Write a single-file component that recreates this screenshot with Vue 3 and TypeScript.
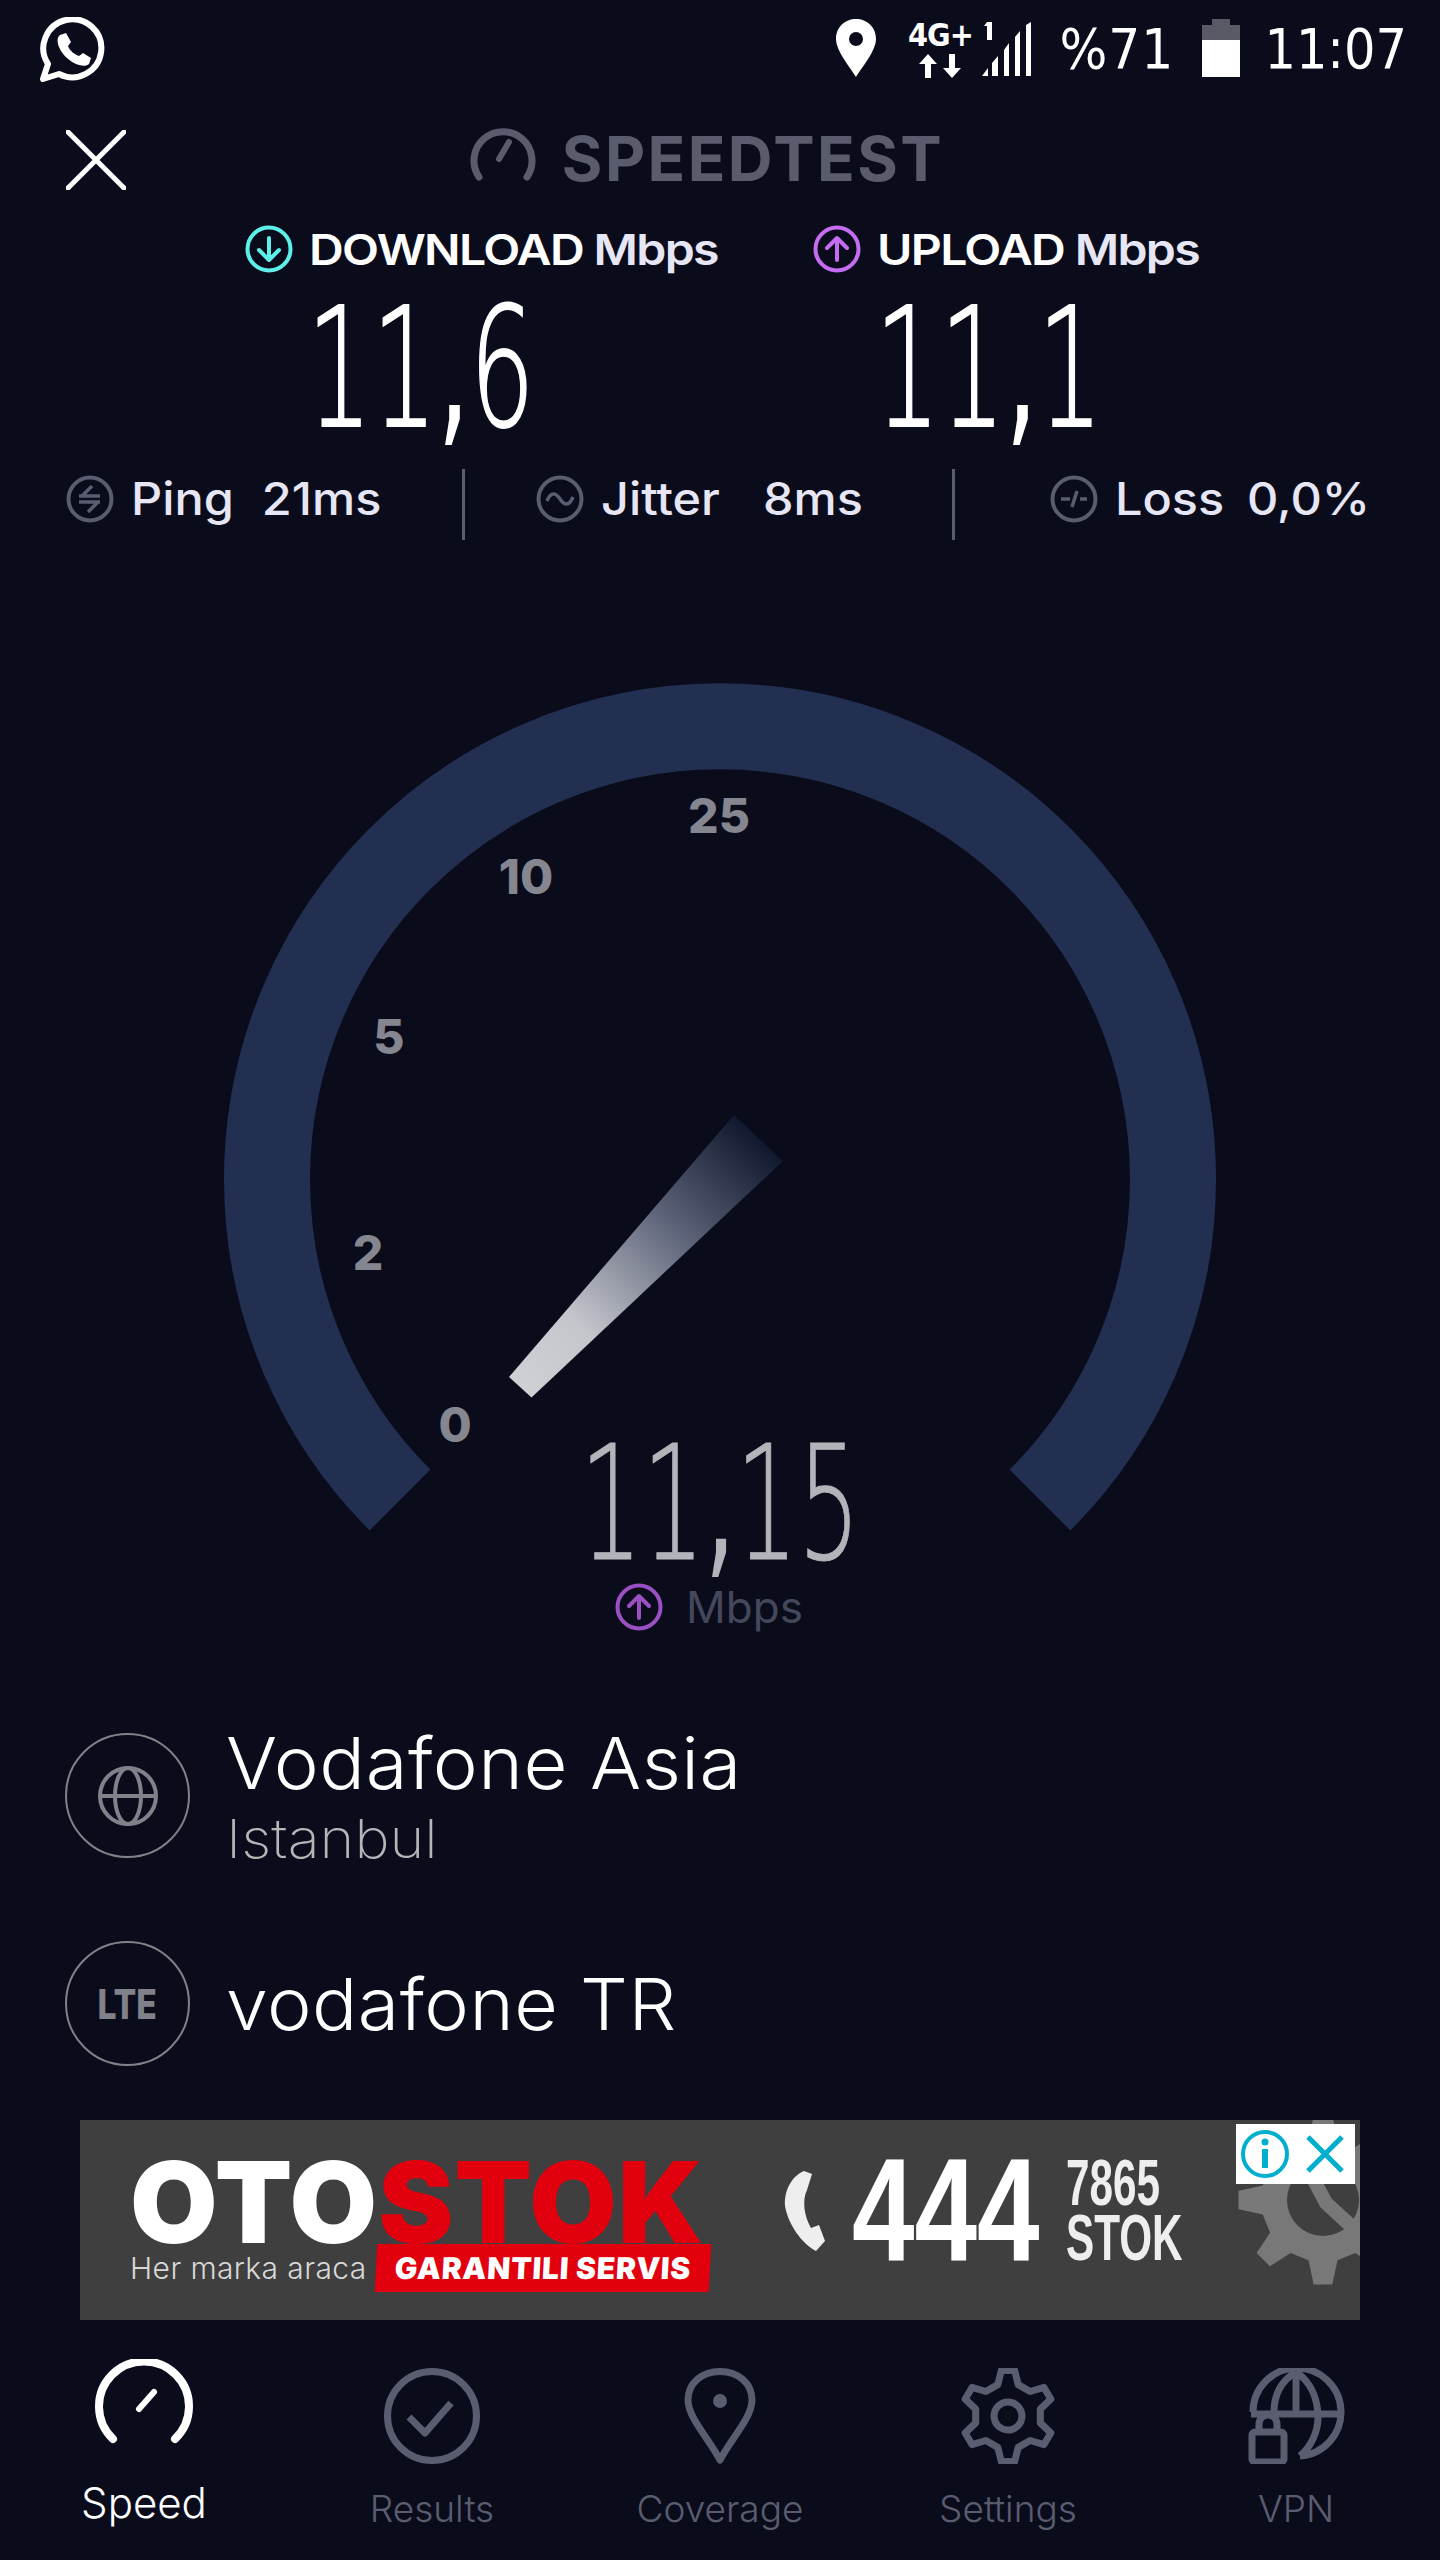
<template>
  <div class="screen">
    <!-- status bar -->
    <div class="status">
      <svg class="whatsapp" width="68" height="66" viewBox="0 0 68 66">
        <path d="M5 62 L10 47 A29 29 0 1 1 21 57 Z" fill="none" stroke="#fff" stroke-width="6" stroke-linejoin="round" />
        <path d="M22 18 l6 -2 5 9 -3 4 c2 5 6 8 11 10 l4 -3 8 5 -2 6 c-3 3 -9 2 -15 -1 c-7 -4 -12 -9 -15 -16 c-2 -5 -2 -10 1 -12 Z" fill="#fff" />
      </svg>
      <div class="status-right">
        <svg width="40" height="58" viewBox="0 0 40 58">
          <path fill-rule="evenodd" d="M20 0 C9 0 0 8 0 20 C0 32 14 48 20 58 C26 48 40 32 40 20 C40 8 31 0 20 0 Z M20 13 a7 7 0 1 1 0 14 a7 7 0 0 1 0 -14 Z" fill="#fff" />
        </svg>
        <div class="net">
          <span class="net-label">4G+</span>
          <svg width="42" height="24" viewBox="0 0 42 24">
            <path d="M9 0 L18 10 H12 V24 H6 V10 H0 Z M33 24 L42 14 H36 V0 H30 V14 H24 Z" fill="#fff" />
          </svg>
        </div>
        <svg class="signal" width="50" height="56" viewBox="0 0 50 56">
          <path d="M5 0 H10 V18 H5 V4 H2 Z" fill="#fff" />
          <path d="M0 54 L6 46 V54 Z M10 41 L16 34 V54 H10 Z M22 28 L27 21 V54 H22 Z M33 15 L38 9 V54 H33 Z M44 3 L49 0 V54 H44 Z" fill="#fff" />
        </svg>
        <span class="status-text pct">%71</span>
        <svg width="38" height="58" viewBox="0 0 38 58">
          <path d="M10 0 H28 V6 H38 V21 H0 V6 H10 Z" fill="#5a5a66" />
          <rect y="21" width="38" height="37" fill="#fff" />
        </svg>
        <span class="status-text time">11:07</span>
      </div>
    </div>

    <!-- title row -->
    <div class="header">
      <svg class="close" width="60" height="60" viewBox="0 0 60 60">
        <path d="M2 2 L58 58 M58 2 L2 58" stroke="#fff" stroke-width="5" stroke-linecap="round" />
      </svg>
      <div class="brand">
        <svg class="brand-mark" width="66" height="58" viewBox="0 0 66 58">
          <path d="M9 53 A29 29 0 1 1 57 53" fill="none" stroke="#5a5c6e" stroke-width="7" stroke-linecap="round" />
          <path d="M29 35 L39 18" stroke="#5a5c6e" stroke-width="6" stroke-linecap="round" />
        </svg>
        <span class="brand-name">SPEEDTEST</span>
      </div>
    </div>

    <!-- results -->
    <div class="speeds">
      <div v-for="s in speeds" :key="s.label" class="speed" :class="s.cls">
        <div class="speed-head">
          <svg width="48" height="48" viewBox="0 0 48 48">
            <circle cx="24" cy="24" r="21.5" fill="none" :stroke="s.color" stroke-width="4" />
            <path :d="s.arrow" fill="none" :stroke="s.color" stroke-width="4" stroke-linecap="round" stroke-linejoin="round" />
          </svg>
          <span class="speed-label">{{ s.label }} <em>Mbps</em></span>
        </div>
        <div class="speed-value">11<span class="comma">,</span>{{ s.last }}</div>
      </div>
    </div>

    <div class="stats">
      <div class="stat ping">
        <svg width="48" height="48" viewBox="0 0 48 48">
          <circle cx="24" cy="24" r="21.5" class="stat-ring" />
          <path d="M13 21 H34 M26 11 L16 21 M13 27 H34 M22 37 L32 27" class="stat-line" />
        </svg>
        <div class="stat-text"><span>Ping</span><span>21ms</span></div>
      </div>
      <i class="divider" />
      <div class="stat jitter">
        <svg width="48" height="48" viewBox="0 0 48 48">
          <circle cx="24" cy="24" r="21.5" class="stat-ring" />
          <path d="M11 26 C15 16 20 18 24 24 C28 30 33 32 37 22" class="stat-line" />
        </svg>
        <div class="stat-text wide"><span>Jitter</span><span>8ms</span></div>
      </div>
      <i class="divider" />
      <div class="stat loss">
        <svg width="48" height="48" viewBox="0 0 48 48">
          <circle cx="24" cy="24" r="21.5" class="stat-ring" />
          <path d="M11 24 H20 M22 32 L27 16 M30 24 H37" class="stat-line" />
        </svg>
        <div class="stat-text tight"><span>Loss</span><span>0,0%</span></div>
      </div>
    </div>

    <!-- gauge -->
    <div class="gauge">
      <svg width="1440" height="1000" viewBox="0 660 1440 1000">
        <defs>
          <linearGradient id="needle" gradientUnits="userSpaceOnUse" x1="520" y1="1387" x2="758" y2="1138">
            <stop offset="0" stop-color="#cfd0d4" />
            <stop offset="0.25" stop-color="#c4c6cc" />
            <stop offset="0.65" stop-color="#5c6278" />
            <stop offset="1" stop-color="#10192f" />
          </linearGradient>
        </defs>
        <path d="M400 1500 A453 453 0 1 1 1040 1500" fill="none" stroke="#222f50" stroke-width="86" />
        <path d="M509 1377 L531.5 1397.5 L783 1161 L734 1115 Z" fill="url(#needle)" />
        <text v-for="t in ticks" :key="t.label" :x="t.x" :y="t.y" class="tick" text-anchor="middle">{{ t.label }}</text>
      </svg>
      <div class="readout">
        <div class="readout-value">11<span class="comma">,</span>15</div>
        <div class="readout-unit">
          <svg width="48" height="48" viewBox="0 0 48 48">
            <circle cx="24" cy="24" r="21.5" fill="none" stroke="#9a50c2" stroke-width="4" />
            <path d="M24 35 V14 M14 23 L24 13 L34 23" fill="none" stroke="#9a50c2" stroke-width="4" stroke-linecap="round" stroke-linejoin="round" />
          </svg>
          <span>Mbps</span>
        </div>
      </div>
    </div>

    <!-- server and provider -->
    <div class="server first">
      <div class="badge">
        <svg width="60" height="62" viewBox="0 0 60 62">
          <g fill="none" stroke="#808189" stroke-width="4">
            <circle cx="30" cy="31" r="28" />
            <ellipse cx="30" cy="31" rx="13" ry="28" />
            <path d="M2 31 H58" />
          </g>
        </svg>
      </div>
      <div>
        <div class="server-name">Vodafone Asia</div>
        <div class="server-sub">Istanbul</div>
      </div>
    </div>
    <div class="server second">
      <div class="badge"><span class="lte">LTE</span></div>
      <div class="server-name short">vodafone TR</div>
    </div>

    <!-- ad banner -->
    <div class="ad">
      <div class="ad-logo">
        <div class="ad-mark">OTO<b>STOK</b></div>
        <div class="ad-tagline">
          <span class="ad-her">Her marka araca</span>
          <span class="ad-tag"><span>GARANTILI SERVIS</span></span>
        </div>
      </div>
      <svg class="ad-phone" width="44" height="82" viewBox="0 0 44 82">
        <path d="M22 1 L30 4 L25 20 C20 30 22 46 29 58 L37 55 L43 71 L34 81 C20 74 6 54 3 36 C2 20 10 6 22 1 Z" fill="#eee" />
      </svg>
      <div class="ad-big">444</div>
      <div class="ad-nums">
        <span>7865</span>
        <span>STOK</span>
      </div>
      <svg class="ad-gear" width="190" height="190" viewBox="0 0 190 190">
        <path :d="gearPath(95, 95, 85, 62, 8)" fill="#787878" />
        <circle cx="95" cy="95" r="36" fill="#3f3f3f" />
        <path d="M80 64 L98 98 L122 120" fill="none" stroke="#787878" stroke-width="14" />
      </svg>
      <div class="ad-choices">
        <svg width="50" height="50" viewBox="0 0 50 50">
          <circle cx="25" cy="25" r="22" fill="none" stroke="#00aecd" stroke-width="4" />
          <circle cx="25" cy="13" r="3.5" fill="#00aecd" />
          <rect x="22" y="20" width="6" height="19" fill="#00aecd" />
        </svg>
        <svg width="40" height="40" viewBox="0 0 40 40">
          <path d="M3 3 L37 37 M37 3 L3 37" stroke="#00aecd" stroke-width="5" />
        </svg>
      </div>
    </div>

    <!-- bottom nav -->
    <nav class="nav">
      <div class="nav-item active">
        <svg width="100" height="96" viewBox="0 0 100 96">
          <path d="M19 80 A45 45 0 1 1 81 80" fill="none" stroke="#fff" stroke-width="8" stroke-linecap="round" />
          <path d="M45 50 L60 33" stroke="#fff" stroke-width="6" stroke-linecap="round" />
        </svg>
        <span>Speed</span>
      </div>
      <div class="nav-item">
        <svg width="100" height="96" viewBox="0 0 100 96">
          <circle cx="50" cy="48" r="44.5" class="nav-stroke" />
          <path d="M27 49 L43 65 L69 35" class="nav-stroke" />
        </svg>
        <span>Results</span>
      </div>
      <div class="nav-item">
        <svg width="100" height="96" viewBox="0 0 100 96">
          <path d="M50 92 C40 72 18 50 18 32 C18 15 32 3.500 50 3.500 C68 3.500 82 15 82 32 C82 50 60 72 50 92 Z" class="nav-stroke" />
          <circle cx="50" cy="33" r="7" fill="#5a5c70" />
        </svg>
        <span>Coverage</span>
      </div>
      <div class="nav-item">
        <svg width="100" height="96" viewBox="0 0 100 96">
          <path :d="gearPath(50, 48, 46, 33, 6)" class="nav-stroke" />
          <circle cx="50" cy="48" r="14" class="nav-stroke" />
        </svg>
        <span>Settings</span>
      </div>
      <div class="nav-item">
        <svg width="100" height="96" viewBox="0 0 100 96">
          <path d="M7 44 A44 44 0 1 1 54 88 M5 46 H94 M50 4 C30 16 28 34 28 44 M50 4 C68 16 72 36 72 50 C72 62 66 78 54 88 M50 4 V44" class="nav-stroke" />
          <rect x="6" y="64" width="32" height="30" rx="3" class="nav-stroke" />
          <path d="M13 64 V56 A9 9 0 0 1 31 56 V64" class="nav-stroke" />
        </svg>
        <span>VPN</span>
      </div>
    </nav>
  </div>
</template>

<script setup lang="ts">
const speeds = [
  {
    label: 'DOWNLOAD',
    last: '6',
    cls: 'down',
    color: '#5ef0e8',
    arrow: 'M24 13 V34 M14 25 L24 35 L34 25',
  },
  {
    label: 'UPLOAD',
    last: '1',
    cls: 'up',
    color: '#c56cf0',
    arrow: 'M24 35 V14 M14 23 L24 13 L34 23',
  },
]

const ticks = [
  { label: '0', x: 455, y: 1442 },
  { label: '2', x: 368, y: 1270 },
  { label: '5', x: 389, y: 1054 },
  { label: '10', x: 526, y: 894 },
  { label: '25', x: 719, y: 833 },
]

// cog outline, used by the settings tab and the banner
function gearPath(cx: number, cy: number, outer: number, inner: number, teeth: number) {
  const step = (Math.PI * 2) / teeth
  const pts: string[] = []
  for (let i = 0; i < teeth; i++) {
    const a = -Math.PI / 2 + i * step
    const spots: [number, number][] = [
      [inner, a - step * 0.3],
      [outer, a - step * 0.14],
      [outer, a + step * 0.14],
      [inner, a + step * 0.3],
    ]
    for (const [r, t] of spots) {
      pts.push(`${(cx + r * Math.cos(t)).toFixed(1)} ${(cy + r * Math.sin(t)).toFixed(1)}`)
    }
  }
  return `M${pts.join(' L')} Z`
}
</script>

<style>
html,
body {
  background: #0a0c1c;
}
</style>

<style scoped>
.screen {
  width: 1440px;
  height: 2560px;
  background: #0a0c1c;
  color: #fff;
  font-family: Inter, "Noto Sans", sans-serif;
  overflow: hidden;
}

.status {
  height: 100px;
  display: flex;
  justify-content: space-between;
  padding: 17px 33px 0 38px;
  box-sizing: border-box;
}

.status-right {
  display: flex;
  align-items: flex-start;
  padding-top: 2px;
}

.net {
  margin-left: 34px;
  width: 60px;
  display: flex;
  flex-direction: column;
  align-items: center;
}

.net-label {
  font-family: "DejaVu Sans", sans-serif;
  font-stretch: condensed;
  font-weight: 700;
  font-size: 32px;
  line-height: 32px;
  height: 35px;
  letter-spacing: -1px;
}

.signal {
  margin-left: 12px;
  margin-top: 3px;
}

.status-text {
  font-family: "DejaVu Sans", sans-serif;
  font-stretch: condensed;
  font-weight: 400;
  font-size: 56px;
  line-height: 60px;
  color: #fff;
}

.pct {
  margin: 0 33px 0 27px;
  letter-spacing: 1px;
  width: 110px;
  white-space: nowrap;
}

.time {
  font-size: 55px;
  margin-left: 24px;
}

.header {
  height: 110px;
  position: relative;
  display: flex;
  justify-content: center;
  align-items: flex-start;
}

.close {
  position: absolute;
  left: 66px;
  top: 30px;
}

.brand {
  display: flex;
  align-items: center;
  gap: 26px;
  padding-top: 24px;
  margin-right: 26px;
}

.brand-mark {
  margin-top: -12px;
}

.brand-name {
  font-size: 62px;
  line-height: 70px;
  font-weight: 700;
  letter-spacing: 2.5px;
  color: #5a5c6e;
}

.speeds {
  height: 245px;
  padding: 15px 0 0 245px;
  margin-bottom: -1px;
  display: flex;
  gap: 95px;
}

.speed {
  width: 473px;
}

.speed.up {
  width: 384px;
}

.speed-head {
  display: flex;
  align-items: center;
  gap: 16px;
  height: 48px;
}

.speed-label {
  font-size: 43px;
  font-weight: 600;
  letter-spacing: -1.5px;
  white-space: nowrap;
  transform: scaleX(1.12);
  transform-origin: left;
}

.speed-label em {
  font-style: normal;
  color: #e6e6f5;
}

.speed-value {
  font-family: "DejaVu Sans", sans-serif;
  font-weight: 200;
  font-size: 165px;
  line-height: 165px;
  margin: 14px 0 0 62px;
  transform: scaleX(0.62);
  transform-origin: left;
  white-space: nowrap;
  -webkit-text-stroke: 2px #fff;
}

.comma {
  font-weight: 400;
  -webkit-text-stroke: 0;
}

.stats {
  height: 71px;
  position: relative;
  display: flex;
  align-items: center;
  padding-left: 66px;
  color: #e6e6f5;
  font-size: 45px;
  font-weight: 500;
}

.stat {
  display: flex;
  align-items: center;
  gap: 17px;
  white-space: nowrap;
  margin-bottom: 12px;
}

.stat-text {
  display: flex;
  gap: 26px;
  transform: scaleX(1.08);
  transform-origin: left;
}

.stat-text.wide {
  gap: 40px;
}

.stat-text.tight {
  gap: 21px;
}

.ping {
  width: 396px;
}

.jitter {
  width: 416px;
  margin-left: 71px;
}

.loss {
  margin-left: 95px;
}

.stat-ring {
  fill: none;
  stroke: #5a5c70;
  stroke-width: 4;
}

.stat-line {
  fill: none;
  stroke: #5a5c70;
  stroke-width: 3.5;
}

.divider {
  width: 3px;
  height: 71px;
  background: #5a5c70;
  display: block;
}

.gauge {
  position: relative;
  margin-top: 120px;
  height: 1073px;
  flex-shrink: 0;
}

.gauge svg {
  display: block;
}

.tick {
  font-family: Inter, sans-serif;
  font-size: 48px;
  font-weight: 800;
  fill: #85868f;
}

.readout {
  position: absolute;
  left: 0;
  right: 0;
  top: 759px;
  display: flex;
  flex-direction: column;
  align-items: center;
}

.readout-value {
  font-family: "DejaVu Sans", sans-serif;
  font-weight: 200;
  font-size: 158px;
  line-height: 170px;
  color: #b3b4ba;
  transform: scaleX(0.62);
  white-space: nowrap;
  -webkit-text-stroke: 1px #b3b4ba;
}

.readout-unit {
  display: flex;
  align-items: center;
  gap: 23px;
  margin: -9px 22px 0 0;
  color: #45475a;
  font-size: 44px;
}

.server {
  display: flex;
  align-items: center;
  padding-left: 65px;
  gap: 36px;
}

.server.first {
  height: 125px;
}

.server.second {
  margin-top: 83px;
  height: 125px;
}

.badge {
  width: 125px;
  height: 125px;
  box-sizing: border-box;
  border: 2px solid #808189;
  border-radius: 50%;
  display: flex;
  align-items: center;
  justify-content: center;
  flex-shrink: 0;
}

.lte {
  font-size: 41px;
  font-weight: 800;
  color: #808189;
  transform: scaleX(0.82);
}

.server-name {
  font-size: 72px;
  line-height: 74px;
  font-weight: 300;
  letter-spacing: 0.5px;
  transform: scaleX(1.055);
  transform-origin: left;
  white-space: nowrap;
}

.first .server-name {
  margin-top: 6px;
}

.server-name.short {
  transform: scaleX(1.045);
}

.server-sub {
  font-size: 54px;
  line-height: 66px;
  margin-top: 6px;
  font-weight: 200;
  color: #b5b6b8;
  transform: scaleX(1.1);
  transform-origin: left;
}

.ad {
  position: relative;
  margin: 54px 0 0 80px;
  width: 1280px;
  height: 200px;
  background: #3f3f3f;
  overflow: hidden;
  display: flex;
  align-items: flex-start;
  box-sizing: border-box;
  padding: 26px 0 0 50px;
}

.ad-logo {
  width: 592px;
}

.ad-mark {
  font-weight: 900;
  font-size: 113px;
  line-height: 112px;
  letter-spacing: 1px;
  white-space: nowrap;
}

.ad-mark b {
  color: #e2000f;
  font-weight: 900;
}

.ad-tagline {
  display: flex;
  align-items: center;
  gap: 4px;
  margin-top: -14px;
}

.ad-her {
  font-size: 30px;
  font-weight: 300;
  color: #d8d8d8;
  white-space: nowrap;
  width: 242px;
  letter-spacing: 0.4px;
}

.ad-tag {
  width: 334px;
  height: 48px;
  background: #e2000f;
  transform: skewX(-3deg);
  display: flex;
  align-items: center;
  justify-content: center;
}

.ad-tag span {
  font-size: 30px;
  font-weight: 900;
  white-space: nowrap;
  letter-spacing: 0.8px;
}

.ad-phone {
  margin: 24px 0 0 60px;
}

.ad-big {
  font-family: "Liberation Sans", sans-serif;
  font-weight: 700;
  font-size: 146px;
  line-height: 130px;
  margin-left: 26px;
  width: 214px;
  transform: scaleX(0.77);
  transform-origin: left;
  white-space: nowrap;
}

.ad-nums {
  display: flex;
  flex-direction: column;
  font-family: "Liberation Sans", sans-serif;
  font-weight: 700;
  font-size: 64px;
  line-height: 55px;
  color: #eee;
  margin-top: 10px;
  width: 120px;
  transform: scaleX(0.66);
  transform-origin: left;
  white-space: nowrap;
}

.ad-gear {
  position: absolute;
  left: 1148px;
  top: -15px;
}

.ad-choices {
  position: absolute;
  top: 4px;
  right: 5px;
  width: 119px;
  height: 60px;
  background: #fff;
  display: flex;
  align-items: center;
  justify-content: space-between;
  padding: 0 10px 0 4px;
  box-sizing: border-box;
}

.nav {
  height: 240px;
  display: grid;
  grid-template-columns: repeat(5, 288px);
}

.nav-item {
  display: flex;
  flex-direction: column;
  align-items: center;
  padding-top: 48px;
  color: #5a5c70;
  font-size: 37px;
  font-weight: 300;
}

.nav-item svg {
  margin-bottom: 22px;
}

.nav-item.active {
  padding-top: 39px;
  color: #fff;
  font-size: 42px;
}

.nav-stroke {
  fill: none;
  stroke: #5a5c70;
  stroke-width: 7;
  stroke-linejoin: round;
}
</style>
